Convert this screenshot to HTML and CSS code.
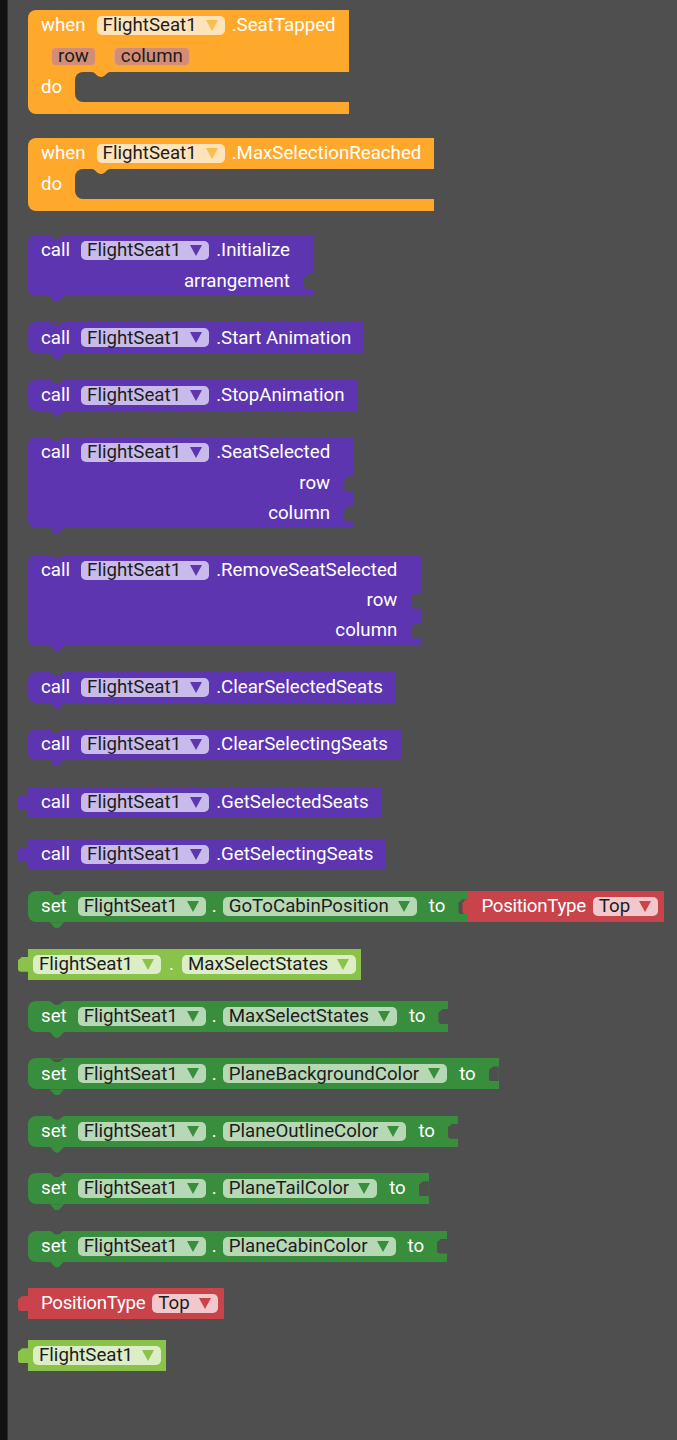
FILE: index.html
```html
<!DOCTYPE html>
<html lang="en">
<head>
<meta charset="utf-8">
<title>FlightSeat1 blocks</title>
<link rel="stylesheet" href="styles.css">
</head>
<body>
<div class="page">
  <div class="strip"></div>
  <div class="canvas">

    <div class="block event orange">
      <div class="row"><span class="kw">when</span><span class="field">FlightSeat1<i class="tri"></i></span><span class="name">.SeatTapped</span></div>
      <div class="row params"><span class="chip">row</span><span class="chip">column</span></div>
      <div class="dorow"><span class="do">do</span><div class="slot"></div></div>
      <div class="foot"></div>
    </div>

    <div class="block event orange">
      <div class="row"><span class="kw">when</span><span class="field">FlightSeat1<i class="tri"></i></span><span class="name">.MaxSelectionReached</span></div>
      <div class="dorow"><span class="do">do</span><div class="slot"></div></div>
      <div class="foot"></div>
    </div>

    <div class="block stmt purple multi">
      <div class="row"><span class="kw">call</span><span class="field">FlightSeat1<i class="tri"></i></span><span class="name">.Initialize</span></div>
      <div class="row input"><span>arrangement</span></div>
    </div>

    <div class="block stmt purple">
      <div class="row"><span class="kw">call</span><span class="field">FlightSeat1<i class="tri"></i></span><span class="name">.Start Animation</span></div>
    </div>

    <div class="block stmt purple">
      <div class="row"><span class="kw">call</span><span class="field">FlightSeat1<i class="tri"></i></span><span class="name">.StopAnimation</span></div>
    </div>

    <div class="block stmt purple multi">
      <div class="row"><span class="kw">call</span><span class="field">FlightSeat1<i class="tri"></i></span><span class="name">.SeatSelected</span></div>
      <div class="row input"><span>row</span></div>
      <div class="row input"><span>column</span></div>
    </div>

    <div class="block stmt purple multi">
      <div class="row"><span class="kw">call</span><span class="field">FlightSeat1<i class="tri"></i></span><span class="name">.RemoveSeatSelected</span></div>
      <div class="row input"><span>row</span></div>
      <div class="row input"><span>column</span></div>
    </div>

    <div class="block stmt purple">
      <div class="row"><span class="kw">call</span><span class="field">FlightSeat1<i class="tri"></i></span><span class="name">.ClearSelectedSeats</span></div>
    </div>

    <div class="block stmt purple">
      <div class="row"><span class="kw">call</span><span class="field">FlightSeat1<i class="tri"></i></span><span class="name">.ClearSelectingSeats</span></div>
    </div>

    <div class="block value purple">
      <div class="row"><span class="kw">call</span><span class="field">FlightSeat1<i class="tri"></i></span><span class="name">.GetSelectedSeats</span></div>
    </div>

    <div class="block value purple">
      <div class="row"><span class="kw">call</span><span class="field">FlightSeat1<i class="tri"></i></span><span class="name">.GetSelectingSeats</span></div>
    </div>

    <div class="combo">
      <div class="block stmt green">
        <div class="row sock"><span class="kw">set</span><span class="field">FlightSeat1<i class="tri"></i></span><span class="dot">.</span><span class="field">GoToCabinPosition<i class="tri"></i></span><span class="to">to</span></div>
      </div>
      <div class="block value red plugged">
        <div class="row lbl"><span class="label">PositionType</span><span class="field">Top<i class="tri"></i></span></div>
      </div>
    </div>

    <div class="block value lgreen">
      <div class="row tight"><span class="field">FlightSeat1<i class="tri"></i></span><span class="dot">.</span><span class="field">MaxSelectStates<i class="tri"></i></span></div>
    </div>

    <div class="block stmt green">
      <div class="row sock"><span class="kw">set</span><span class="field">FlightSeat1<i class="tri"></i></span><span class="dot">.</span><span class="field">MaxSelectStates<i class="tri"></i></span><span class="to">to</span></div>
    </div>

    <div class="block stmt green">
      <div class="row sock"><span class="kw">set</span><span class="field">FlightSeat1<i class="tri"></i></span><span class="dot">.</span><span class="field">PlaneBackgroundColor<i class="tri"></i></span><span class="to">to</span></div>
    </div>

    <div class="block stmt green">
      <div class="row sock"><span class="kw">set</span><span class="field">FlightSeat1<i class="tri"></i></span><span class="dot">.</span><span class="field">PlaneOutlineColor<i class="tri"></i></span><span class="to">to</span></div>
    </div>

    <div class="block stmt green">
      <div class="row sock"><span class="kw">set</span><span class="field">FlightSeat1<i class="tri"></i></span><span class="dot">.</span><span class="field">PlaneTailColor<i class="tri"></i></span><span class="to">to</span></div>
    </div>

    <div class="block stmt green">
      <div class="row sock"><span class="kw">set</span><span class="field">FlightSeat1<i class="tri"></i></span><span class="dot">.</span><span class="field">PlaneCabinColor<i class="tri"></i></span><span class="to">to</span></div>
    </div>

    <div class="block value red">
      <div class="row lbl"><span class="label">PositionType</span><span class="field">Top<i class="tri"></i></span></div>
    </div>

    <div class="block value lgreen">
      <div class="row tight"><span class="field">FlightSeat1<i class="tri"></i></span></div>
    </div>

  </div>
</div>
</body>
</html>
```
FILE: styles.css
```css
* { box-sizing: border-box; }

html, body {
  margin: 0;
  padding: 0;
  background: #4f4f4f;
}

body {
  font-family: Roboto, "Liberation Sans", sans-serif;
  font-size: 18.7px;
  line-height: 1;
}

.page {
  display: flex;
  min-height: 1440px;
}

.strip {
  flex: none;
  width: 8px;
  background: #121212;
  border-right: 1px solid #2c2c2c;
}

.canvas {
  display: flex;
  flex-direction: column;
  align-items: flex-start;
  padding: 10px 0 0 20px;
}

/* colour themes */
.orange { --c: #ffa92c; --f: #ffe4bb; --t: #ffbb4d; }
.purple { --c: #5e35b1; --f: #c8bbeb; --t: #5e35b1; }
.green  { --c: #388e3c; --f: #b7d8b4; --t: #388e3c; }
.lgreen { --c: #8bc34a; --f: #dcedc8; --t: #8bc34a; }
.red    { --c: #c9434b; --f: #f1c9cc; --t: #c9434b; }

.block {
  position: relative;
  display: flex;
  flex-direction: column;
  background: var(--c);
  color: #ffffff;
}

.row {
  display: flex;
  align-items: center;
  height: 31px;
  padding: 0 13px;
  white-space: nowrap;
}

.kw + .field { margin-left: 11px; }
.field + .name { margin-left: 7px; }
.label + .field { margin-left: 7px; }
.dot { margin: 0 6px; }
.tight .dot { margin: 0 8px; }
.to { margin-left: 12px; }

.label { letter-spacing: -0.3px; }

.field {
  display: inline-flex;
  align-items: center;
  height: 19px;
  padding: 0 7px 0 6px;
  border-radius: 5px;
  background: var(--f);
  color: #1d1d1d;
}

.tri {
  display: inline-block;
  width: 0;
  height: 0;
  margin-left: 9px;
  border-left: 6.5px solid transparent;
  border-right: 6.5px solid transparent;
  border-top: 11px solid var(--t);
}

/* event blocks */
.event {
  border-radius: 8px 0 0 8px;
  margin-bottom: 24px;
}

.params { padding-left: 23px; }

.chip {
  display: inline-flex;
  align-items: center;
  height: 19px;
  padding: 0 6px;
  margin-right: 18px;
  border-radius: 5px;
  background: #d38d76;
  border: 1.5px solid #e4a47f;
  color: #1d1d1d;
}

.dorow {
  display: flex;
  align-items: center;
  height: 30px;
  padding-left: 13px;
}

.do { width: 34px; }

.slot {
  position: relative;
  flex: 1;
  align-self: stretch;
  background: #4f4f4f;
  border-radius: 8px 0 0 8px;
}

.slot::before {
  content: "";
  position: absolute;
  left: 17px;
  top: 0;
  width: 18px;
  height: 5px;
  background: var(--c);
  clip-path: path("M0,0 C3,0 5,5 9,5 C13,5 15,0 18,0 Z");
}

.foot { height: 12px; }

/* statement blocks */
.stmt {
  border-radius: 8px 0 0 8px;
  margin-bottom: 26.4px;
}

.stmt::before {
  content: "";
  position: absolute;
  left: 21px;
  top: 0;
  width: 16px;
  height: 4px;
  background: #4f4f4f;
  clip-path: path("M0,0 C3,0 4,4 8,4 C12,4 13,0 16,0 Z");
}

.stmt::after {
  content: "";
  position: absolute;
  left: 21px;
  bottom: -6px;
  width: 16px;
  height: 6px;
  background: var(--c);
  clip-path: path("M0,0 C3,0 4,6 8,6 C12,6 13,0 16,0 Z");
}

.multi .row { padding-right: 24px; }

.input {
  position: relative;
  height: 30px;
  justify-content: flex-end;
}

.sock {
  position: relative;
  padding-right: 23px;
}

.input::after,
.sock::after {
  content: "";
  position: absolute;
  right: 0;
  top: 8px;
  width: 10px;
  height: 15px;
  background: #4f4f4f;
  clip-path: path("M10,0 L5,0 Q3,0 2,2 Q1,3 0,3 L0,12 Q0,15 3,15 L10,15 Z");
}

/* value (output) blocks */
.value { margin-bottom: 21.3px; }

.value::before {
  content: "";
  position: absolute;
  left: -10px;
  top: 8px;
  width: 10px;
  height: 15px;
  background: var(--c);
  clip-path: path("M10,0 L5,0 Q3,0 2,2 Q1,3 0,3 L0,12 Q0,15 3,15 L10,15 Z");
}

.tight { padding: 0 5px; }
.lbl { padding: 0 6px 0 13px; }

.combo {
  display: flex;
  align-items: flex-start;
  margin-bottom: 26.4px;
}

.combo .block { margin-bottom: 0; }

.plugged::before {
  left: -6px;
  width: 6px;
  clip-path: path("M6,0 L4,0 Q2,0 1.5,2 Q1,3 0,3.5 L0,12 Q0,15 3,15 L6,15 Z");
}
```
